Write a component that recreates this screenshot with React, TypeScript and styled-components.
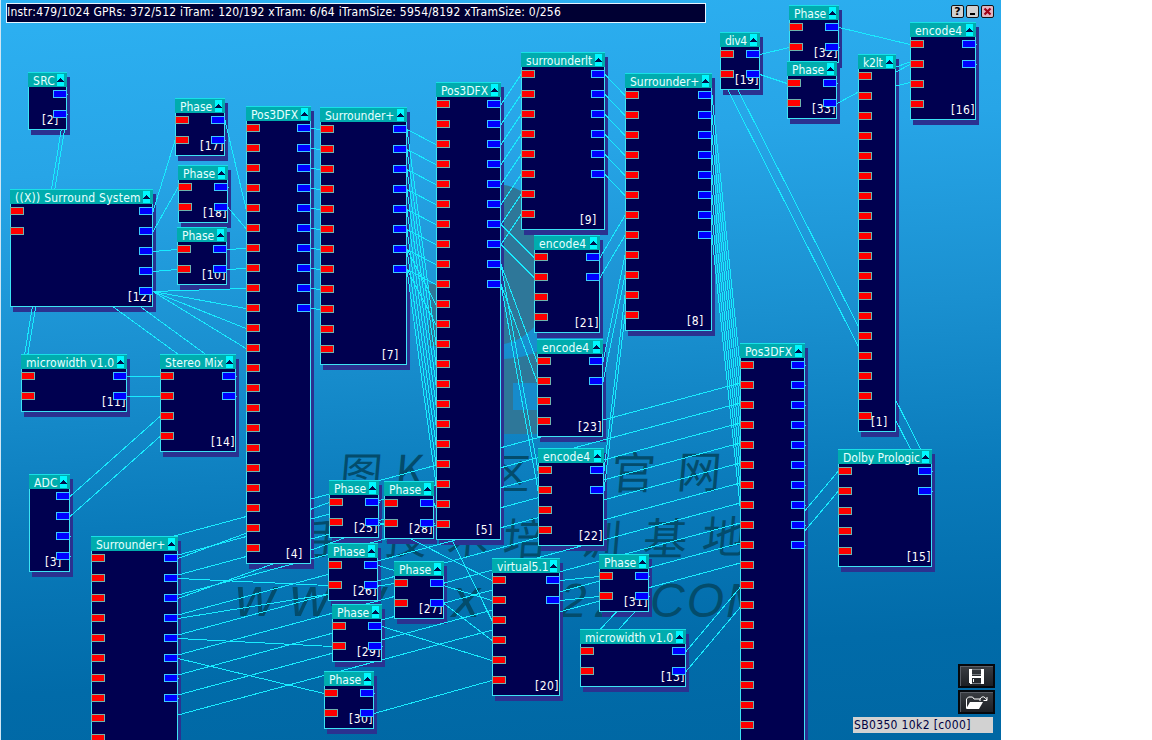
import React from 'react';
import styled, { createGlobalStyle } from 'styled-components';

const Global = createGlobalStyle`
  html, body { margin: 0; background: #fff; overflow: hidden; }
  * { box-sizing: border-box; }
`;

const FONT = `'DejaVu Sans Condensed', 'DejaVu Sans', sans-serif`;

const Workspace = styled.main`
  position: relative;
  width: 1001px;
  height: 740px;
  overflow: hidden;
  display: flex;
  flex-direction: column;
  justify-content: space-between;
  border-left: 1px solid #cfe6f4;
  background: linear-gradient(176deg, #2db1f2 0%, #27a5e7 22%, #1a90d0 45%, #0a7bbb 66%, #016ba9 86%, #0067a3 100%);
  font-family: ${FONT};
  font-stretch: condensed;
  font-size: 12px;
`;

const DesktopEdge = styled.div`
  position: absolute;
  left: -1px;
  top: 531px;
  width: 1px;
  height: 209px;
  background: repeating-linear-gradient(#0a1c2c 0 42px, #7b6f66 42px 46px, #14263c 46px 70px);
`;

const TopBar = styled.header`
  position: relative;
  display: flex;
  justify-content: space-between;
  align-items: flex-start;
  padding: 3px 7px 0 5px;
`;

const Status = styled.div`
  width: 700px;
  height: 20px;
  border: 1px solid #e8f4ff;
  background: #000033;
  color: #fff;
  line-height: 17px;
  letter-spacing: 0.235px;
  white-space: pre;
  overflow: hidden;
`;

const WindowButtons = styled.div`
  display: flex;
  gap: 2px;
  padding-top: 2px;
`;

const WinButton = styled.button<{ $tone?: string }>`
  width: 13px;
  height: 13px;
  padding: 0;
  border: 1px solid #101418;
  border-radius: 2px;
  background: ${(p) => p.$tone || '#d0d0d0'};
  color: #000;
  font: bold 11px/11px 'DejaVu Sans', sans-serif;
  display: grid;
  place-items: center;
`;

const Footer = styled.footer`
  position: relative;
  display: flex;
  flex-direction: column;
  align-items: flex-end;
  gap: 2px;
  padding: 0 6px 7px 0;
`;

const ToolButton = styled.button`
  width: 37px;
  height: 24px;
  padding: 0;
  border: 2px solid #05080c;
  background: linear-gradient(#3a3d42, #1c1f24);
  box-shadow: inset 1px 1px 0 #5a5e66;
  display: grid;
  place-items: center;
`;

const CardName = styled.div`
  width: 140px;
  height: 16px;
  margin: 1px 2px 0 0;
  padding-left: 1px;
  background: #d2d2d2;
  color: #000040;
  line-height: 17px;
  letter-spacing: 0.35px;
  white-space: pre;
`;

const Canvas = styled.div`
  position: absolute;
  inset: 0;
  left: -1px;
`;

const Layer = styled.svg`
  position: absolute;
  left: 0;
  top: 0;
`;

type Box = { $x: number; $y: number; $w: number; $h: number };

const Shadow = styled.div<Box>`
  position: absolute;
  left: ${(p) => p.$x + 3}px;
  top: ${(p) => p.$y + 5}px;
  width: ${(p) => p.$w}px;
  height: ${(p) => p.$h}px;
  background: #2b3190;
`;

const NodeBox = styled.section<Box>`
  position: absolute;
  left: ${(p) => p.$x}px;
  top: ${(p) => p.$y}px;
  width: ${(p) => p.$w}px;
  height: ${(p) => p.$h}px;
  background: #000050;
  border: 1px solid #3ce4f4;
  border-top: 0;
`;

const NodeTitle = styled.div`
  display: flex;
  justify-content: space-between;
  height: 15px;
  margin: 0 -1px;
  padding: 1px 3px 0 5px;
  border-top: 1px solid #18e0e6;
  background: #00acae;
  color: #e6ffff;
  line-height: 14px;
  white-space: pre;
`;

const TitleText = styled.span<{ $track: number }>`
  width: 0;
  letter-spacing: ${(p) => p.$track}px;
`;

const Fold = styled.svg`
  flex: none;
  width: 7px;
  height: 12px;
  background: #00f8ff;
`;

const NodeId = styled.span`
  position: absolute;
  left: calc(100% - 24px);
  bottom: 3px;
  height: 12px;
  background: #000050;
  color: #fff;
  line-height: 12px;
  letter-spacing: 0.4px;
  white-space: pre;
`;

const Ports = styled.div<{ $out?: boolean }>`
  position: absolute;
  top: 18px;
  ${(p) => (p.$out ? 'right: -1px;' : 'left: -1px;')}
  display: flex;
  flex-direction: column;
  gap: 12px;
`;

const Port = styled.i<{ $out?: boolean }>`
  width: 14px;
  height: 8px;
  border: 1px solid ${(p) => (p.$out ? '#3cc8ff' : '#70b4ac')};
  background: ${(p) => (p.$out ? '#0000ff' : '#ff0000')};
`;

type Spec = { id: string; title: string; x: number; y: number; w: number; h: number; ins: number; outs: number; track: number };
const n = (id: string, title: string, x: number, y: number, w: number, h: number, ins: number, outs: number, track = 0): Spec =>
  ({ id, title, x, y, w, h, ins, outs, track });

const NODES: Spec[] = [
  n('2', 'SRC', 28, 72, 39, 58, 0, 2, 0.3),
  n('12', '((X)) Surround System', 10, 189, 143, 118, 2, 5, 0.25),
  n('17', 'Phase', 175, 98, 50, 58, 2, 2),
  n('18', 'Phase', 178, 165, 50, 58, 2, 2),
  n('10', 'Phase', 177, 227, 50, 58, 2, 2),
  n('11', 'microwidth v1.0', 21, 354, 106, 58, 2, 2, 0.08),
  n('14', 'Stereo Mix', 160, 354, 76, 98, 4, 2, 0.1),
  n('3', 'ADC', 29, 474, 41, 98, 0, 4, 0.2),
  n('24', 'Surrounder+', 91, 536, 87, 258, 12, 8),
  n('4', 'Pos3DFX', 246, 106, 65, 458, 22, 10),
  n('7', 'Surrounder+', 320, 107, 87, 258, 12, 8),
  n('25', 'Phase', 329, 480, 50, 58, 2, 2),
  n('28', 'Phase', 384, 481, 50, 58, 2, 2),
  n('5', 'Pos3DFX', 436, 82, 65, 458, 22, 10),
  n('26', 'Phase', 328, 543, 50, 58, 2, 2),
  n('27', 'Phase', 394, 561, 50, 58, 2, 2),
  n('29', 'Phase', 332, 604, 50, 58, 2, 2),
  n('30', 'Phase', 324, 671, 50, 58, 2, 2),
  n('9', 'surrounderlt', 521, 52, 84, 178, 8, 6),
  n('21', 'encode4', 534, 235, 66, 98, 4, 2, 0.1),
  n('23', 'encode4', 537, 339, 66, 98, 4, 2, 0.1),
  n('22', 'encode4', 538, 448, 66, 98, 4, 2, 0.1),
  n('8', 'Surrounder+', 625, 73, 87, 258, 12, 8),
  n('20', 'virtual5.1', 492, 558, 68, 138, 6, 2),
  n('31', 'Phase', 599, 554, 50, 58, 2, 2),
  n('13', 'microwidth v1.0', 580, 629, 106, 58, 2, 2, 0.08),
  n('6', 'Pos3DFX', 740, 343, 65, 458, 22, 10),
  n('19', 'div4', 720, 32, 40, 58, 2, 2, -0.3),
  n('32', 'Phase', 789, 5, 50, 58, 2, 2),
  n('33', 'Phase', 787, 61, 50, 58, 2, 2),
  n('1', 'k2lt', 858, 54, 38, 378, 18, 0, -0.2),
  n('16', 'encode4', 910, 22, 66, 98, 4, 2, 0.1),
  n('15', 'Dolby Prologic', 838, 449, 94, 118, 5, 2),
];

const VIEW_HEIGHT = 740;

const byId: Record<string, Spec> = Object.fromEntries(NODES.map((s) => [s.id, s]));

type Wire = [string, number, string, number];
const run = (from: string, o: number, to: string, i: number, count: number): Wire[] =>
  Array.from({ length: count }, (_, k) => [from, o + k, to, i + k] as Wire);

const WIRES: Wire[] = [
  ...run('2', 0, '11', 0, 2),
  ['12', 0, '17', 1], ['12', 1, '18', 0], ['12', 2, '10', 0], ['12', 3, '10', 1],
  ['12', 4, '4', 8], ['12', 4, '4', 9], ['12', 4, '4', 10], ['12', 4, '4', 11],
  ...run('14', 0, '12', 0, 2), ...run('11', 0, '14', 0, 2), ...run('3', 0, '14', 2, 2),
  ['17', 0, '4', 4], ['18', 1, '4', 5], ...run('10', 0, '4', 6, 2),
  ...run('4', 0, '7', 0, 10), ...run('7', 0, '5', 2, 8), ...run('7', 0, '5', 12, 8), ...run('7', 6, '5', 10, 2),
  ...run('5', 0, '9', 0, 8), ...run('5', 6, '21', 0, 2), ...run('5', 8, '23', 0, 2), ...run('5', 8, '22', 0, 2),
  ...run('9', 0, '8', 0, 6), ...run('21', 0, '8', 6, 2), ...run('23', 0, '8', 8, 2), ...run('22', 0, '8', 10, 2),
  ...run('8', 0, '6', 0, 8), ...run('6', 0, '24', 0, 10),
  ['24', 0, '25', 0], ['24', 1, '26', 1], ['24', 2, '28', 1], ['24', 3, '27', 0], ['24', 4, '29', 1], ['24', 5, '30', 0],
  ['25', 1, '20', 0], ['28', 0, '20', 2], ['26', 0, '20', 1], ['27', 1, '20', 3], ['29', 0, '20', 4], ['30', 1, '20', 5],
  ...run('20', 0, '31', 0, 2), ...run('31', 0, '13', 0, 2), ...run('13', 0, '15', 0, 2), ...run('15', 0, '19', 0, 2),
  ['19', 0, '32', 1], ['19', 1, '33', 0], ['32', 0, '16', 0], ['33', 1, '16', 1],
];

const wirePath = ([a, o, b, i]: Wire) => {
  const s = byId[a];
  const t = byId[b];
  return `M${s.x + s.w} ${s.y + 22.5 + o * 20}L${t.x} ${t.y + 22.5 + i * 20}`;
};

const stubs = NODES.flatMap((s) =>
  Array.from({ length: s.outs }, (_, k) => `M${s.x + s.w} ${s.y + 22.5 + k * 20}h1`),
).join('');

const MARKS: [string, number, number, number][] = [
  ['图', 339, 488, 42], ['K', 394, 487, 44], ['区', 487, 489, 42], ['官', 610, 489, 44], ['网', 676, 488, 44],
  ['手', 304, 554, 42], ['技', 384, 554, 42], ['术', 446, 554, 42], ['培', 502, 555, 44],
  ['训', 578, 555, 42], ['基', 642, 555, 44], ['地', 701, 553, 44],
];

const Backdrop = () => (
  <Layer width="1001" height="740">
    <path d="M504 185Q536 190 552 235Q556 310 531 330Q520 341 504 344ZM429 284h8v62h-8zM504 359Q526 358 540 350V434H504Z" fill="#2e7799" />
    <rect x="513" y="383" width="28" height="27" fill="#168bcc" />
    <g fill="#034c6c" fontFamily="'Noto Sans CJK SC', sans-serif">
      {MARKS.map(([c, x, y, size]) => (
        <text key={c} transform={`translate(${x} ${y}) skewX(-5)`} fontSize={size}>{c}</text>
      ))}
    </g>
    <g fill="#034c6c" fontFamily="'Liberation Sans', sans-serif" fontStyle="italic" fontSize="56">
      <text x="235" y="616" textLength="150" lengthAdjust="spacing">www</text>
      <text x="452" y="617">x</text>
      <text x="560" y="617" fontSize="48" textLength="62">22</text>
      <text x="636" y="617">.</text>
      <text x="650" y="617" fontSize="48" textLength="116">COM</text>
    </g>
  </Layer>
);

const ModuleNode = ({ s }: { s: Spec }) => (
  <NodeBox $x={s.x} $y={s.y} $w={s.w} $h={s.h}>
    <NodeTitle>
      <TitleText $track={s.track}>{s.title}</TitleText>
      <Fold viewBox="0 0 7 12" shapeRendering="crispEdges">
        <path d="M0 8V7h1V6h1V5h1V4h1v1h1v1h1v1h1v1z" fill="#00104c" />
      </Fold>
    </NodeTitle>
    {s.y + s.h < VIEW_HEIGHT && <NodeId>[{s.id}]</NodeId>}
    <Ports>{Array.from({ length: s.ins }, (_, k) => <Port key={k} />)}</Ports>
    <Ports $out>{Array.from({ length: s.outs }, (_, k) => <Port key={k} $out />)}</Ports>
  </NodeBox>
);

export default function App() {
  return (
    <Workspace>
      <Global />
      <Canvas>
        <Backdrop />
        {NODES.map((s) => <Shadow key={s.id} $x={s.x} $y={s.y} $w={s.w} $h={s.h} />)}
        <Layer width="1001" height="740" shapeRendering="crispEdges" fill="none" stroke="#18ecff">
          {WIRES.map((w) => <path key={w.join()} d={wirePath(w)} />)}
          <path d={stubs} />
          <path d="M896 67L910 62M896 86L910 82.5" />
        </Layer>
        {NODES.map((s) => <ModuleNode key={s.id} s={s} />)}
      </Canvas>
      <DesktopEdge />
      <TopBar>
        <Status>Instr:479/1024 GPRs: 372/512 iTram: 120/192 xTram: 6/64 iTramSize: 5954/8192 xTramSize: 0/256</Status>
        <WindowButtons>
          <WinButton>?</WinButton>
          <WinButton>
            <svg width="9" height="9"><path d="M2 6h5v2h-5z" fill="#000" /></svg>
          </WinButton>
          <WinButton $tone="#e0b4c0">
            <svg width="9" height="9"><path d="M1.5 1.5l6 6m0-6l-6 6" stroke="#a00018" strokeWidth="2.2" /></svg>
          </WinButton>
        </WindowButtons>
      </TopBar>
      <Footer>
        <ToolButton>
          <svg width="15" height="15" shapeRendering="crispEdges">
            <path d="M0 0h3v7h9V0h3v15H1v-1H0z" fill="#fff" />
            <path d="M3 0h9v1H3zM3 5h9v1H3z" fill="#777b80" />
            <path d="M3 9h9v5H3z" fill="#24272c" />
            <path d="M3 14h9v1H3z" fill="#777b80" />
            <path d="M4 10h1v3H4z" fill="#fff" />
          </svg>
        </ToolButton>
        <ToolButton>
          <svg width="24" height="15">
            <path d="M1.5 13V4l2-2h4l1.500 2h6v2" fill="none" stroke="#fff" />
            <path d="M1 14L5 7h13l-4 7z" fill="#fff" />
            <path d="M15 4q3-5 7 1m0-3v3.500h-3.500" fill="none" stroke="#fff" />
          </svg>
        </ToolButton>
        <CardName>SB0350 10k2 [c000]</CardName>
      </Footer>
    </Workspace>
  );
}
